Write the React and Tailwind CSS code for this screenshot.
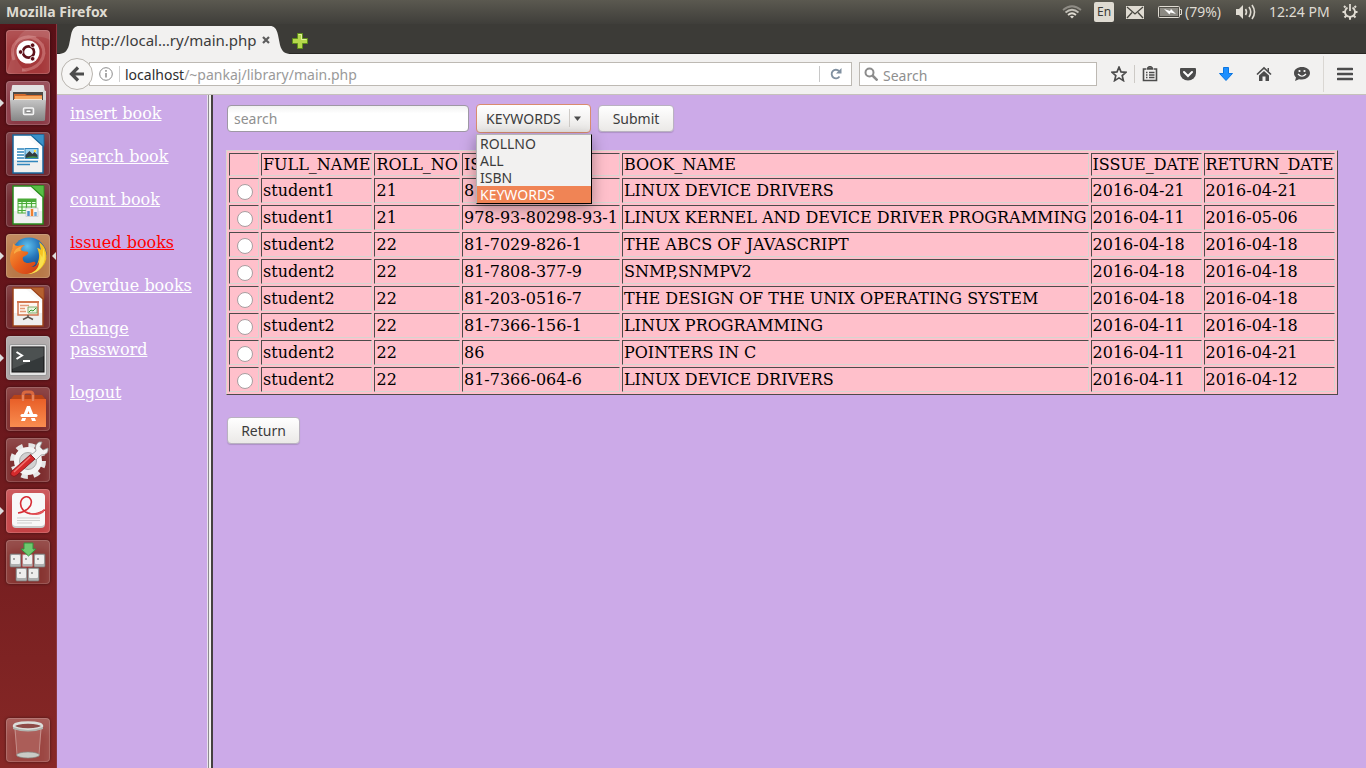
import React from "react";

const rows = [
  ["student1", "21", "81-7366-064-6", "LINUX DEVICE DRIVERS", "2016-04-21", "2016-04-21"],
  ["student1", "21", "978-93-80298-93-1", "LINUX KERNEL AND DEVICE DRIVER PROGRAMMING", "2016-04-11", "2016-05-06"],
  ["student2", "22", "81-7029-826-1", "THE ABCS OF JAVASCRIPT", "2016-04-18", "2016-04-18"],
  ["student2", "22", "81-7808-377-9", "SNMP,SNMPV2", "2016-04-18", "2016-04-18"],
  ["student2", "22", "81-203-0516-7", "THE DESIGN OF THE UNIX OPERATING SYSTEM", "2016-04-18", "2016-04-18"],
  ["student2", "22", "81-7366-156-1", "LINUX PROGRAMMING", "2016-04-11", "2016-04-18"],
  ["student2", "22", "86", "POINTERS IN C", "2016-04-11", "2016-04-21"],
  ["student2", "22", "81-7366-064-6", "LINUX DEVICE DRIVERS", "2016-04-11", "2016-04-12"],
];
const columns = ["FULL_NAME", "ROLL_NO", "ISBN", "BOOK_NAME", "ISSUE_DATE", "RETURN_DATE"];
const links = ["insert book", "search book", "count book", "issued books", "Overdue books", "change password", "logout"];
const options = ["ROLLNO", "ALL", "ISBN", "KEYWORDS"];

/* ---------- launcher drawings, each on a 44 unit square ---------- */

function UbuntuIcon() {
  return (
    <svg viewBox="0 0 44 44" className="h-11 w-11">
      <g fill="none" stroke="#e9a8a4" strokeOpacity=".4" strokeWidth="3">
        <path d="M8 30C2 14 14 4 30 8M36 14c6 14-4 26-20 26M10 12C20 2 38 8 38 24" />
      </g>
      <path d="M0 44C8 26 6 8 20 0h24v10C30 2 12 10 10 24c0 8 6 14 12 18" fill="#fff" opacity=".1" />
      <circle cx="22" cy="22" r="11.5" fill="#fff" />
      <circle cx="22.5" cy="22" r="5.6" fill="none" stroke="#5e1119" strokeWidth="2.6" />
      <path d="M17 22h-3M25.500 17l2-3.500M25.500 27l2 3.500" stroke="#fff" strokeWidth="1" />
      <g fill="#5e1119" stroke="#fff" strokeWidth=".8">
        <circle cx="14.6" cy="22" r="2.3" /><circle cx="26.6" cy="15.2" r="2.3" /><circle cx="26.6" cy="28.8" r="2.3" />
      </g>
    </svg>
  );
}
function FilesIcon() {
  return (
    <svg viewBox="0 0 44 44" className="h-11 w-11">
      <defs>
        <linearGradient id="cab" x1="0" y1="0" x2="0" y2="1"><stop stopColor="#c4c4c4" /><stop offset="1" stopColor="#868686" /></linearGradient>
      </defs>
      <path d="M6 5q0-1 1-1h30q1 0 1 1l2 14H4z" fill="#e2e2e2" />
      <path d="M7 11h30v9H7z" fill="#4e4a46" />
      <path d="M8 13h11l2 1h15v6H8z" fill="#d36b2c" />
      <path d="M9 15h27v4H9z" fill="#f6a860" />
      <path d="M8 18h28v1H8z" fill="#f5e2cc" />
      <path d="M4 10l3-1v10H4zM40 10l-3-1v10h3z" fill="#d6d6d6" />
      <path d="M4 19h36l-1 20q0 1-2 1H7q-2 0-2-1z" fill="url(#cab)" />
      <rect x="17.500" y="27" width="10" height="6.500" rx="1" fill="#aaa" stroke="#f5f5f5" strokeWidth="1.500" />
      <rect x="20" y="29" width="5" height="2.500" fill="#fff" stroke="#666" strokeWidth=".7" />
    </svg>
  );
}
function DocBase({ color, light, children }) {
  return (
    <svg viewBox="0 0 44 44" className="h-11 w-11">
      <path d="M7 3h18l12 11v27H7z" fill="#f9f9f9" stroke={color} strokeWidth="1.500" />
      <path d="M8 4h12l16 14v22H8z" fill="#fff" />
      <path d="M8 28h28v12H8z" fill="#e4e4e4" opacity=".6" />
      <path d="M24.500 2.500H38v12z" fill={light} stroke={color} strokeWidth=".8" />
      {children}
    </svg>
  );
}
function WriterIcon() {
  return (
    <DocBase color="#17659b" light="#3a91c9">
      <path d="M11 17h7M11 20h7M11 23h7M11 26h7M11 29.500h21M11 32.500h13" stroke="#3186bd" strokeWidth="1.700" />
      <rect x="19" y="16.500" width="13" height="10" fill="#9ed5f2" stroke="#3186bd" />
      <path d="M19.500 26v-3l4-4 3 3 2-2 3 3v3z" fill="#333b3f" /><path d="M19.500 26q6-3 12-1v1z" fill="#3f8e4d" /><circle cx="29" cy="19" r="1.200" fill="#ffe14d" />
    </DocBase>
  );
}
function CalcIcon() {
  return (
    <DocBase color="#278b1b" light="#58bd45">
      <rect x="12" y="16" width="18" height="14" fill="#e9ffe4" stroke="#4bab38" />
      <path d="M12 17.500h18" stroke="#4bab38" strokeWidth="3" />
      <path d="M12 20.500h18M12 24h18M12 27.500h18M16 16v14M20.500 16v14M25.500 16v14" stroke="#4bab38" strokeWidth="1.200" />
      <rect x="20" y="25" width="12" height="8.500" fill="#f6f6f6" stroke="#bbb" strokeWidth=".6" />
      <path d="M22.500 33v-5" stroke="#4b8cc8" strokeWidth="2.500" /><path d="M26 33v-7" stroke="#f08030" strokeWidth="2.500" /><path d="M29.500 33v-4" stroke="#6aa6d6" strokeWidth="2.500" />
    </DocBase>
  );
}
function FirefoxIcon() {
  return (
    <svg viewBox="0 0 44 44" className="h-11 w-11">
      <defs>
        <radialGradient id="globe" cx=".45" cy=".25" r=".8"><stop stopColor="#5ec1ee" /><stop offset=".45" stopColor="#2573b8" /><stop offset="1" stopColor="#142f6b" /></radialGradient>
        <linearGradient id="fox" x1="0" y1="0" x2="1" y2="1"><stop stopColor="#f9a13a" /><stop offset=".5" stopColor="#e9601c" /><stop offset="1" stopColor="#c93a18" /></linearGradient>
      </defs>
      <circle cx="23" cy="21" r="17.500" fill="url(#globe)" />
      <path d="M33 8c8 5 10 17 4 24-6 8-16 10-24 5 9 1 17-2 19-9 2-5 1-11-1-14 2 0 3 1 4 2-1-3-1-6-2-8z" fill="#f6c321" />
      <path d="M37 14c3 7 2 14-1 18-4 6-9 8-14 8 8-3 14-12 12-20 1 1 2 2 2 4 1-3 1-6 1-10z" fill="#f9e14d" />
      <path d="M7 9c1 2 3 3 5 3 3-1 5-1 7-1-3 2-4 3-4 5 2 2 5 1 7 2 1 2-3 4-5 5-1 3 1 6 5 6 3 0 5-2 7-1 2 2-2 4-4 5 4 0 6-2 8-5 0 7-5 11-12 12C11 41 4 33 4 25c0-7 3-9 3-16z" fill="url(#fox)" />
      <path d="M8 18c2-4 5-5 9-6-3 2-3 3-2 5-3 0-5 1-7 3z" fill="#fcb94c" opacity=".7" />
    </svg>
  );
}
function ImpressIcon() {
  return (
    <DocBase color="#9b4219" light="#b5602f">
      <rect x="12" y="17" width="20" height="13" fill="#fff6f0" stroke="#d1764f" strokeWidth="1.500" />
      <path d="M11 17h22" stroke="#d1764f" strokeWidth="2" />
      <path d="M14 20.500h9M14 26.500h6" stroke="#e39a78" strokeWidth="1.500" /><path d="M14 23.500h5" stroke="#e39a78" strokeWidth="1.500" />
      <path d="M22 22h9v6h-9z" fill="#e8f4df" stroke="#6a9a4e" strokeWidth=".8" /><path d="M23 27l2-2 2 1 3-3" stroke="#34962c" fill="none" />
      <path d="M22 30v2l-5 2.500M22 32l5 2.500" stroke="#5c534d" strokeWidth="1.500" fill="none" />
    </DocBase>
  );
}
function TerminalIcon() {
  return (
    <svg viewBox="0 0 44 44" className="h-11 w-11">
      <rect x="3.500" y="8.500" width="37" height="31" rx="1.500" fill="#e4e4e4" stroke="#999" />
      <rect x="6" y="11" width="32" height="25" fill="#34393a" stroke="#111" />
      <path d="M6 11h32v9L6 33z" fill="#fff" opacity=".12" />
      <path d="M10.500 16l5.500 3.500-5.500 3.500" fill="none" stroke="#fff" strokeWidth="2" /><path d="M17 25h7" stroke="#fff" strokeWidth="2" />
    </svg>
  );
}
function SoftwareIcon() {
  return (
    <svg viewBox="0 0 44 44" className="h-11 w-11">
      <defs><linearGradient id="bag" x1="0" y1="0" x2="0" y2="1"><stop stopColor="#e85f28" /><stop offset="1" stopColor="#f98d50" /></linearGradient></defs>
      <path d="M8 8h28l4 5v26H4V13z" fill="#b94317" />
      <path d="M4 12h36v28H4z" fill="url(#bag)" />
      <path d="M17 14V8q0-3 3-3h4q3 0 3 3v6" fill="none" stroke="#d9683f" strokeWidth="3" />
      <path d="M17 14V8M27 14V8" stroke="#f3a07c" strokeWidth="1" />
      <path d="M21 19h3l6 15h-4l-3.500-10L19 34h-4z" fill="#fff" />
      <path d="M16 28.500h14" stroke="#fff" strokeWidth="3" strokeLinecap="round" /><path d="M15 30.500h14" stroke="#ef753f" strokeWidth="1" />
    </svg>
  );
}
function SettingsIcon() {
  return (
    <svg viewBox="0 0 44 44" className="h-11 w-11">
      <circle cx="22" cy="23" r="15.500" fill="none" stroke="#e5e5e5" strokeWidth="5" strokeDasharray="6.500 5.670" />
      <circle cx="22" cy="23" r="10.500" fill="#e4e4e4" stroke="#f4f4f4" strokeWidth="7" />
      <circle cx="22" cy="23" r="8.500" fill="#d1d1d1" stroke="#a9a9a9" strokeWidth="1" />
      <path d="M25 17l5-4q-2-6 3-9l3 0-2 5 3 3 5-2q1 7-7 7l-5 5z" fill="#f2f2f2" stroke="#999" strokeWidth=".8" />
      <path d="M24.500 16.500l4.500 4.500L11 37q-3 3-6 0-1-2 1-4z" fill="#d52a2c" stroke="#7e1216" strokeWidth=".8" />
      <path d="M24 19L8 34" stroke="#f17774" strokeWidth="1.500" />
    </svg>
  );
}
function ReaderIcon() {
  return (
    <svg viewBox="0 0 44 44" className="h-11 w-11">
      <rect x="6" y="5" width="33" height="34" rx="4" fill="#c9c9c9" />
      <rect x="6" y="4" width="33" height="33" rx="4" fill="#f8f8f8" />
      <path d="M12 24c8-1 15-7 13-13-2-5-8-4-10 1-2 7 4 13 12 13 5 0 8-2 12-4" fill="none" stroke="#d72d35" strokeWidth="1.600" />
      <path d="M20 22c7 4 13 3 18-2v3c-5 4-11 4-18-1z" fill="#e2555b" />
      <path d="M11 29h23M11 31.500h23M11 34h15" stroke="#cfcfcf" strokeWidth="1" />
    </svg>
  );
}
function KeyCap({ x, y, red }) {
  return (
    <g>
      <rect x={x} y={y} width="11" height="13" rx="1" fill="#aeb0b0" stroke={red ? "#c23434" : "#777"} strokeWidth=".7" />
      <rect x={x + 1} y={y + 1} width="9" height="9" rx="1" fill="#eeeeed" />
      <path d={`M${x + 3} ${y + 4}h2v2h-2z`} fill="#a4a4a4" />
    </g>
  );
}
function KeyboardIcon() {
  return (
    <svg viewBox="0 0 44 44" className="h-11 w-11">
      <KeyCap x={4} y={14} /><KeyCap x={16} y={14} red /><KeyCap x={28} y={14} /><KeyCap x={10} y={28} /><KeyCap x={22} y={28} />
      <path d="M18 3h9v6h3l-7.500 7L15 9h3z" fill="#6ec96f" stroke="#348f3c" />
    </svg>
  );
}
function TrashIcon() {
  return (
    <svg viewBox="0 0 44 44" className="h-11 w-11">
      <path d="M8 9l3 28q11 5 22 0l3-28z" fill="#c98983" opacity=".35" />
      <path d="M9 10l2 27M35 10l-2 27" stroke="#d7b0ac" opacity=".6" />
      <ellipse cx="22" cy="37" rx="11.500" ry="3" fill="#c9cbc6" stroke="#878a84" strokeWidth=".7" />
      <ellipse cx="22" cy="8" rx="14" ry="3.500" fill="#8d4b48" stroke="#dcdedb" strokeWidth="2.500" />
      <path d="M7 9q15 6 30 0v2q-15 5-30 0z" fill="#b1b5b0" />
    </svg>
  );
}

const apps = [
  { name: "Search your computer", Icon: UbuntuIcon, tile: "bg-[#a5383a]" },
  { name: "Files", Icon: FilesIcon, tile: "bg-[#8b3945]", running: true },
  { name: "Writer", Icon: WriterIcon, tile: "bg-[#70272f]" },
  { name: "Calc", Icon: CalcIcon, tile: "bg-[#6d252c]" },
  { name: "Firefox", Icon: FirefoxIcon, tile: "bg-[#b87948]", running: true, active: true },
  { name: "Impress", Icon: ImpressIcon, tile: "bg-[#72272b]" },
  { name: "Terminal", Icon: TerminalIcon, tile: "bg-[#a9a3a3]", running: true },
  { name: "Software", Icon: SoftwareIcon, tile: "bg-[#7c2a2b]" },
  { name: "System Settings", Icon: SettingsIcon, tile: "bg-[#7d2d2e]" },
  { name: "Document Reader", Icon: ReaderIcon, tile: "bg-[#c54245]", running: true },
  { name: "Input Method", Icon: KeyboardIcon, tile: "bg-[#873431]" },
];

function LauncherTile({ app }) {
  const { Icon } = app;
  return (
    <div className="relative flex justify-center">
      {app.running && (
        <svg viewBox="0 0 4 8" className="absolute left-0 top-[18px] h-2 w-1"><path d="M0 0v8l4-4z" fill="#ddd" /></svg>
      )}
      <button
        type="button"
        aria-label={app.name}
        className={"h-11 w-11 overflow-hidden rounded shadow-[inset_0_0_0_1px_rgba(255,255,255,0.16),inset_0_10px_12px_rgba(255,255,255,0.14),0_0_3px_rgba(0,0,0,0.5)] " + app.tile}
      >
        <Icon />
      </button>
      {app.active && (
        <svg viewBox="0 0 4 8" className="absolute right-0 top-[18px] h-2 w-1"><path d="M4 0v8L0 4z" fill="#ddd" /></svg>
      )}
    </div>
  );
}

/* ---------- system bar ---------- */

function SystemBar() {
  return (
    <header className="flex h-6 shrink-0 items-center justify-between bg-linear-to-b from-[#5b5950] to-[#3f3e3a] pl-1.5 pr-2 text-sm leading-6 text-[#dfdbd2]">
      <span className="font-bold">Mozilla Firefox</span>
      <div className="flex items-center">
        <svg viewBox="0 0 20 14" className="mr-3 h-3.5 w-5" fill="none" strokeWidth="1.700">
          <path d="M1 5q9-7.500 18 0" stroke="#8f8c85" /><path d="M3.500 7.500q6.500-5.500 13 0" stroke="#c3c0b8" />
          <path d="M6 10q4-3.500 8 0" stroke="#dfdbd2" /><path d="M8 11.500q2-1.500 4 0l-2 2z" fill="#dfdbd2" />
        </svg>
        <span className="mr-3 flex h-5 w-5 items-center justify-center rounded-xs bg-[#dfdbd2] text-xs text-[#3c3b37]">En</span>
        <svg viewBox="0 0 18 13" className="mr-3.5 h-[13px] w-[18px]">
          <path d="M0 0h18v13H0z" fill="#dfdbd2" /><path d="M1 1l8 7 8-7M1 12l5-5.500M17 12l-5-5.500" fill="none" stroke="#47463f" strokeWidth="1.300" />
        </svg>
        <svg viewBox="0 0 24 12" className="mr-[3px] h-3 w-6">
          <rect x=".5" y=".5" width="21" height="11" rx="1" fill="none" stroke="#dfdbd2" /><path d="M2 2h18v8H2z" fill="#8c8a83" /><path d="M22 3.500h1.500v5H22" fill="none" stroke="#dfdbd2" />
          <path d="M6 3l6 2 1-2 5 5-5.500-1.500-1 2z" fill="#fff" />
        </svg>
        <span className="w-[51px] whitespace-nowrap">(79%)</span>
        <svg viewBox="0 0 20 16" className="mr-[13px] h-4 w-5" fill="none" stroke="#dfdbd2" strokeWidth="1.600">
          <path d="M0 5h3l4-4v14l-4-4H0z" fill="#dfdbd2" stroke="none" /><path d="M9.500 5q2 3 0 6M13 3q3.500 5 0 10" /><path d="M16 1q5 7 0 14" />
        </svg>
        <span className="w-[73px] whitespace-nowrap">12:24 PM</span>
        <svg viewBox="0 0 16 16" className="h-4 w-4" fill="none" stroke="#dfdbd2">
          <path d="M5.500 3.600a5 5 0 1 0 5 0" strokeWidth="1.800" /><path d="M8 0v7" strokeWidth="1.800" />
          <path d="M3.500 3.500L2 2M12.500 3.500L14 2M3 8H.5M13 8h2.500M4.500 11.500L2.500 13.500M11.500 11.500l2 2M8 13v2.800" strokeWidth="2" />
        </svg>
      </div>
    </header>
  );
}

/* ---------- browser chrome ---------- */

function TabStrip() {
  return (
    <div className="flex h-[30px] shrink-0 items-end border-b border-[#292825] bg-[#3c3b37]">
      <div className="-mb-px flex h-7 items-stretch">
        <svg viewBox="0 0 22 28" className="h-7 w-[22px]"><path d="M0 28c7 0 10-2 12-9l2-10C15.500 2 18 0 22 0v28z" fill="#f2f1f0" /></svg>
        <div className="flex w-[191px] items-center justify-between bg-[#f2f1f0] pl-0.5">
          <span className="whitespace-nowrap text-[15px] text-[#3c3c3c]">http://local…ry/main.php</span>
          <button type="button" aria-label="Close tab" className="flex h-4 w-2 items-center">
            <svg viewBox="0 0 8 8" className="h-2 w-2"><path d="M1 1l6 6M7 1L1 7" stroke="#5d5d5d" strokeWidth="2.200" /></svg>
          </button>
        </div>
        <svg viewBox="0 0 22 28" className="h-7 w-[22px]"><path d="M22 28c-7 0-10-2-12-9L8 9C6.500 2 4 0 0 0v28z" fill="#f2f1f0" /></svg>
      </div>
      <button type="button" aria-label="New tab" className="mb-1">
        <svg viewBox="0 0 16 16" className="h-4 w-4"><path d="M5.500.5h5v5h5v5h-5v5h-5v-5h-5v-5h5z" fill="#b6d84c" stroke="#5f8f1b" /><path d="M6.500 1.500h3v5h5" fill="none" stroke="#e0f09a" /></svg>
      </button>
    </div>
  );
}

const g = "#4c4c4c";
const tools = [
  { name: "Bookmarks menu", d: <g fill="none" stroke={g}><path d="M4.500 3H1.500v11.500h13V3H11.500" strokeWidth="1.600" /><path d="M5 2.500h6" strokeWidth="2.500" /><path d="M6 1.500L8 0l2 1.500M4 6.500h1.500M7 6.500h5.500M4 9h1.500M7 9h5.500M4 11.500h1.500M7 11.500h5.500" strokeWidth="1.300" /></g> },
  { name: "Pocket", d: <g><path d="M1 2h14q1 0 1 1v4a8 7.500 0 0 1-16 0V3q0-1 1-1z" fill={g} /><path d="M4 6l4 4 4-4" fill="none" stroke="#fff" strokeWidth="2" strokeLinecap="round" /></g> },
  { name: "Downloads", d: <path d="M5.500 1.500h5v6h4L8 14.500 1.500 7.500h4z" fill="#1e90ff" stroke="#0b75e0" /> },
  { name: "Home", d: <g><path d="M1 8.500L8 2l7 6.500" fill="none" stroke={g} strokeWidth="1.700" /><path d="M11.500 2H13v4l-1.500-1.500zM3 9.500l5-4.500 5 4.500V15H9.500v-4.500h-3V15H3z" fill={g} /></g> },
  { name: "Chat", d: <g><path d="M8 1c4.500 0 8 2.500 8 6s-3.500 6.500-8 6.500c-1 0-2 0-3-.3L1 15l1-3.500C.7 10.300 0 9 0 7c0-3.500 3.500-6 8-6z" fill={g} /><path d="M4 8q4 4.500 8 0" fill="none" stroke="#fff" strokeWidth="1.200" /><circle cx="5.500" cy="5" r="1.100" fill="#fff" /><circle cx="10.500" cy="5" r="1.100" fill="#fff" /></g> },
];

function Toolbar() {
  return (
    <div className="flex h-[41px] shrink-0 items-center border-b border-[#c5c1bb] bg-[#f2f1f0] pl-1 text-sm">
      <button type="button" aria-label="Back" className="z-10 flex h-8 w-8 shrink-0 items-center justify-center rounded-full border border-[#b9b5af] bg-[#f7f6f5]">
        <svg viewBox="0 0 16 16" className="h-4 w-4"><path d="M9 1.500L2.500 8 9 14.500M3 8h12" fill="none" stroke={g} strokeWidth="3.200" /></svg>
      </button>
      <div className="-ml-1 flex h-6 flex-1 items-center border border-[#bdb9b3] bg-white">
        <svg viewBox="0 0 14 14" className="ml-[9px] h-3.5 w-3.5 shrink-0" fill="none" stroke="#8a8a8a"><circle cx="7" cy="7" r="6.300" /><path d="M7 6v4.500M7 3v1.700" strokeWidth="1.500" /></svg>
        <div className="ml-1.5 h-4 w-px bg-[#d0d0d0]" />
        <div className="ml-[5px] flex-1 whitespace-nowrap pt-0.5 text-[#9a9a9a]"><span className="text-[#2e2e2e]">localhost</span>/~pankaj/library/main.php</div>
        <button type="button" aria-label="Reload" className="flex h-4 w-8 items-center justify-center border-l border-[#c8c8c8]">
          <svg viewBox="0 0 12 12" className="h-3 w-3"><path d="M9.500 8.500A4.300 4.300 0 1 1 9 3" fill="none" stroke="#8090a0" strokeWidth="1.800" /><path d="M11.500 0v5.500H6z" fill="#8090a0" /></svg>
        </button>
      </div>
      <div className="ml-[7px] flex h-6 w-[238px] shrink-0 items-center border border-[#bdb9b3] bg-white">
        <svg viewBox="0 0 14 14" className="ml-1 h-3.5 w-3.5 shrink-0" fill="none" stroke="#8c8c8c"><circle cx="5.500" cy="5.500" r="4" strokeWidth="2" /><path d="M8.500 8.500l5 5" strokeWidth="2.500" /></svg>
        <input type="text" aria-label="Search the web" placeholder="Search" className="ml-[5px] h-full min-w-0 flex-1 bg-transparent pt-0.5 outline-none placeholder:text-[#8f8f8f]" />
      </div>
      <button type="button" aria-label="Bookmark" className="ml-3.5 shrink-0">
        <svg viewBox="0 0 16 16" className="h-4 w-4"><path d="M8 1.200l2 4.700 5 .4-3.800 3.300 1.200 5L8 11.900l-4.400 2.700 1.200-5L1 6.300l5-.4z" fill="none" stroke={g} strokeWidth="1.700" /></svg>
      </button>
      <div className="ml-[7px] h-[18px] w-px bg-[#cdcac6]" />
      <div className="ml-[7px] flex shrink-0 items-center gap-[22px]">
        {tools.map((t) => (
          <button key={t.name} type="button" aria-label={t.name}><svg viewBox="0 0 16 16" className="h-4 w-4">{t.d}</svg></button>
        ))}
      </div>
      <div className="ml-[13px] h-9 w-px bg-[#dad7d3]" />
      <button type="button" aria-label="Open menu" className="ml-[13px] mr-[13px] shrink-0">
        <svg viewBox="0 0 16 14" className="h-3.5 w-4"><path d="M1 2h14M1 7h14M1 12h14" stroke={g} strokeWidth="2.600" strokeLinecap="round" /></svg>
      </button>
    </div>
  );
}

/* ---------- library page ---------- */

const cell = "whitespace-nowrap border border-t-[#4d4a4a] border-l-[#4d4a4a] border-b-[#d5d5d0] border-r-[#d5d5d0] p-px text-left font-normal";
const button = "h-[27px] rounded border border-[#b9b2c0] bg-linear-to-b from-white to-[#ebe9e7] text-sm text-[#3c3c3c] shadow-[0_1px_1px_rgba(0,0,0,0.15)]";

function LibraryMain() {
  return (
    <main className="min-w-0 flex-1 pl-[13px] pt-[9px] font-['DejaVu_Serif',serif] text-base leading-[19px] text-black">
      <form className="flex items-center pl-px font-['Noto_Sans',sans-serif] text-sm" onSubmit={(e) => e.preventDefault()}>
        <input aria-label="search" type="text" placeholder="search" className="h-[27px] w-[242px] rounded border border-[#9e98a4] bg-linear-to-b from-[#f1f1f1] to-white to-30% px-1.5 outline-none placeholder:text-[#909090]" />
        <div className="relative ml-[7px]">
          <select aria-label="Search by" defaultValue="KEYWORDS" className="block h-[29px] w-[115px] appearance-none rounded border border-[#d98c6e] bg-linear-to-b from-white to-[#e9e7e5] pl-[9px] text-sm text-[#3c3c3c] outline-none">
            {options.map((o) => <option key={o}>{o}</option>)}
          </select>
          <svg viewBox="0 0 16 18" className="pointer-events-none absolute right-1.5 top-[5px] h-[18px] w-4"><path d="M.5 0v18" stroke="#cfcbc7" /><path d="M5 7.500h7L8.500 12z" fill="#4c4c4c" /></svg>
          <ul className="absolute left-0 top-[30px] z-20 w-[116px] border border-y-[#b5b5b5] border-l-[#b5b5b5] border-b-black border-r-black bg-[#f2f1f0] text-sm leading-[17px] text-[#3c3c3c] shadow-[0_4px_14px_rgba(0,0,0,0.35)]">
            {options.map((o) => (
              <li key={o} className={o === "KEYWORDS" ? "bg-[#f08455] pl-[3px] text-white" : "pl-[3px]"}>{o}</li>
            ))}
          </ul>
        </div>
        <button type="submit" className={button + " ml-[7px] w-[76px]"}>Submit</button>
      </form>

      <table className="mt-[17px] border-separate border-spacing-[2px] border border-t-[#d5d5d0] border-l-[#d5d5d0] border-b-[#4d4a4a] border-r-[#4d4a4a] bg-[#ffc0cb]">
        <thead>
          <tr>
            <th className={cell} />
            {columns.map((c) => <th key={c} className={cell}>{c}</th>)}
          </tr>
        </thead>
        <tbody>
          {rows.map((r, i) => (
            <tr key={i}>
              <td className={cell}>
                <input type="radio" name="issue" aria-label={r[3] + ", " + r[0]} className="mb-px ml-1.5 mr-1 mt-1 block h-4 w-4 appearance-none rounded-full border border-[#a89ea0] bg-white" />
              </td>
              {r.map((v, j) => <td key={j} className={cell}>{v}</td>)}
            </tr>
          ))}
        </tbody>
      </table>

      <button type="button" className={button + " ml-px mt-[22px] w-[73px] font-['Noto_Sans',sans-serif]"}>Return</button>
    </main>
  );
}

export default function App() {
  return (
    <div className="flex min-h-screen flex-col font-['Noto_Sans',sans-serif]">
      <SystemBar />
      <div className="flex flex-1">
        <aside aria-label="Launcher" className="flex w-[57px] shrink-0 flex-col justify-between border-r border-[#8c3640] bg-linear-to-b from-[#5a1017] via-[#69171c] to-[#872826] pb-1.5 pt-1.5">
          <div className="flex flex-col gap-[7px]">
            {apps.map((a) => <LauncherTile key={a.name} app={a} />)}
          </div>
          <LauncherTile app={{ name: "Trash", Icon: TrashIcon, tile: "bg-[#9b4541]" }} />
        </aside>
        <div className="flex min-w-0 flex-1 flex-col">
          <TabStrip />
          <Toolbar />
          <div className="flex flex-1 bg-[#ccaae8]">
            <nav className="flex w-[150px] shrink-0 flex-col items-start gap-[22px] pl-[13px] pr-2 pt-2 font-['DejaVu_Serif',serif] text-base leading-[21px] text-white">
              {links.map((l) => (
                <a key={l} href="#" className={l === "issued books" ? "text-[#ff0000] underline" : "underline"}>{l}</a>
              ))}
            </nav>
            <div className="flex w-1.5 shrink-0">
              <div className="w-px bg-[#e9e2ee]" />
              <div className="w-px bg-[#8d8a90]" />
              <div className="w-0.5 bg-[#f2f1f0]" />
              <div className="w-0.5 bg-[#45413f]" />
            </div>
            <LibraryMain />
          </div>
        </div>
      </div>
    </div>
  );
}
